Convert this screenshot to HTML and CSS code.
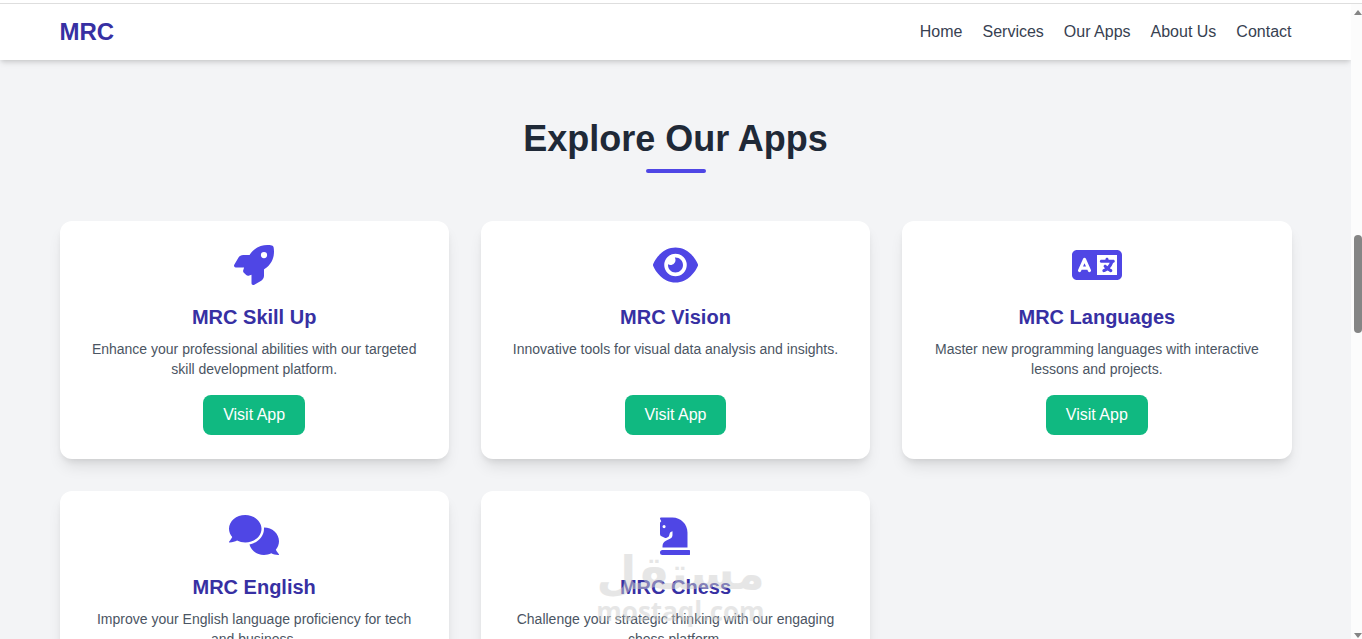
FILE: index.html
```html
<!DOCTYPE html>
<html lang="en">
<head>
<meta charset="utf-8">
<title>MRC Apps</title>
<link rel="stylesheet" href="styles.css">
</head>
<body>
<div class="page">
  <header class="site-header">
    <div class="container header-row">
      <a class="logo" href="#">MRC</a>
      <nav class="nav">
        <a href="#">Home</a>
        <a href="#">Services</a>
        <a href="#">Our Apps</a>
        <a href="#">About Us</a>
        <a href="#">Contact</a>
      </nav>
    </div>
  </header>
  <main class="container apps">
    <h2 class="section-title">Explore Our Apps</h2>
    <div class="grid">
      <article class="card">
        <svg class="icon" viewBox="0 0 512 512"><path d="M156.6 384.9L125.7 354c-8.5-8.5-11.5-20.8-7.7-32.2c3-8.9 7-20.5 11.8-33.8L24 288c-8.6 0-16.6-4.6-20.9-12.1s-4.2-16.7 .2-24.1l52.5-88.5c13-21.9 36.5-35.3 61.9-35.3l82.3 0c2.4-4 4.8-7.7 7.2-11.3C289.1-4.1 411.1-8.1 483.9 5.3c11.6 2.1 20.6 11.2 22.8 22.8c13.4 72.9 9.3 194.8-111.4 276.7c-3.5 2.4-7.3 4.8-11.3 7.2v82.3c0 25.4-13.4 49-35.3 61.9l-88.5 52.5c-7.4 4.4-16.6 4.5-24.1 .2s-12.1-12.2-12.1-20.9V380.8c-14.1 4.9-26.4 8.9-35.7 11.9c-11.2 3.6-23.4 .5-31.8-7.8zM384 168a40 40 0 1 0 0-80 40 40 0 1 0 0 80z"/></svg>
        <h3>MRC Skill Up</h3>
        <p>Enhance your professional abilities with our targeted skill development platform.</p>
        <a class="button" href="#">Visit App</a>
      </article>
      <article class="card">
        <svg class="icon" viewBox="0 0 576 512"><path d="M288 32c-80.8 0-145.5 36.8-192.6 80.6C48.6 156 17.3 208 2.5 243.7c-3.3 7.9-3.3 16.7 0 24.6C17.3 304 48.6 356 95.4 399.4C142.5 443.2 207.2 480 288 480s145.5-36.8 192.6-80.6c46.8-43.5 78.1-95.4 93-131.1c3.3-7.9 3.3-16.7 0-24.6c-14.9-35.7-46.2-87.7-93-131.1C433.5 68.8 368.8 32 288 32zM144 256a144 144 0 1 1 288 0 144 144 0 1 1 -288 0z"/><path d="M279.6 160.4C282.4 160.1 285.2 160 288 160C341 160 384 203 384 256C384 309 341 352 288 352C235 352 192 309 192 256C192 253.2 192.1 250.4 192.4 247.6C201.7 252.9 212.5 256 224 256C259.3 256 288 227.3 288 192C288 180.5 284.9 169.7 279.6 160.4z"/></svg>
        <h3>MRC Vision</h3>
        <p>Innovative tools for visual data analysis and insights.</p>
        <a class="button" href="#">Visit App</a>
      </article>
      <article class="card">
        <svg class="icon" viewBox="0 0 640 512"><path d="M0 128C0 92.7 28.7 64 64 64H256h48 16H576c35.3 0 64 28.7 64 64V384c0 35.3-28.7 64-64 64H320 304 256 64c-35.3 0-64-28.7-64-64V128zm320 0V384H576V128H320zM178.3 175.9c-3.2-7.2-10.4-11.9-18.3-11.9s-15.1 4.7-18.3 11.9l-64 144c-4.5 10.1 .1 21.9 10.2 26.4s21.9-.1 26.4-10.2l8.9-20.1h73.6l8.9 20.1c4.5 10.1 16.3 14.6 26.4 10.2s14.6-16.3 10.2-26.4l-64-144zM160 233.2L179 276H141l19-42.8zM448 164c11 0 20 9 20 20v4h44 16c11 0 20 9 20 20s-9 20-20 20h-2l-1.6 4.5c-8.9 24.4-22.4 46.6-39.6 65.4c.9 .6 1.8 1.1 2.7 1.6l18.9 11.3c9.5 5.7 12.5 18 6.9 27.4s-18 12.5-27.4 6.9l-18.9-11.3c-4.5-2.7-8.8-5.5-13.1-8.5c-10.6 7.5-21.9 14-34 19.4l-3.6 1.6c-10.1 4.5-21.9-.1-26.4-10.2s.1-21.9 10.2-26.4l3.6-1.6c6.4-2.9 12.6-6.1 18.5-9.8l-12.2-12.2c-7.8-7.8-7.8-20.5 0-28.3s20.5-7.8 28.3 0l14.6 14.6 .5 .5c12.4-13.1 22.5-28.3 29.8-45H448 376c-11 0-20-9-20-20s9-20 20-20h52v-4c0-11 9-20 20-20z"/></svg>
        <h3>MRC Languages</h3>
        <p>Master new programming languages with interactive lessons and projects.</p>
        <a class="button" href="#">Visit App</a>
      </article>
      <article class="card">
        <svg class="icon" viewBox="0 0 640 512"><path d="M416 176C416 78.88 322.9 0 208 0S0 78.88 0 176c0 39.57 15.62 75.96 41.67 105.4c-16.39 32.76-39.23 57.32-39.59 57.68c-2.1 2.205-2.67 5.475-1.441 8.354C1.9 350.3 4.602 352 7.66 352c38.35 0 70.76-11.12 95.74-24.04C134.2 343.1 169.8 352 208 352C322.9 352 416 273.1 416 176zM599.6 443.7C624.8 413.9 640 376.6 640 336C640 238.8 554 160 448 160c-.3145 0-.6191 .041-.9336 .043C447.5 165.3 448 170.6 448 176c0 98.62-79.68 181.2-186.1 202.5C282.7 455.1 357.1 512 448 512c33.69 0 65.32-8.008 92.85-21.98C565.2 502 596.1 512 632.3 512c3.059 0 5.76-1.725 7.02-4.605c1.229-2.879 .6582-6.148-1.441-8.354C637.6 498.7 615.9 475.3 599.6 443.7z"/></svg>
        <h3>MRC English</h3>
        <p>Improve your English language proficiency for tech and business.</p>
        <a class="button" href="#">Visit App</a>
      </article>
      <article class="card">
        <svg class="icon" viewBox="0 0 384 512"><path d="M19 272.47l40.63 18.06a32 32 0 0 0 24.88.47l12.78-5.12a32 32 0 0 0 18.76-20.5l9.22-30.65a24 24 0 0 1 12.55-15.65L159.94 208v50.33a48 48 0 0 1-26.53 42.94l-57.22 28.65A80 80 0 0 0 32 401.48V416h319.86V224c0-106-85.92-192-191.92-192H12A12 12 0 0 0 0 44a16.9 16.9 0 0 0 1.79 7.58L16 80l-9 9a24 24 0 0 0-7 17v137.21a32 32 0 0 0 19 29.26zM52 128a20 20 0 1 1-20 20 20 20 0 0 1 20-20zm316 320H32a32 32 0 0 0 0 64h336a32 32 0 0 0 0-64z"/></svg>
        <h3>MRC Chess</h3>
        <p>Challenge your strategic thinking with our engaging chess platform.</p>
        <a class="button" href="#">Visit App</a>
        <div class="watermark">
          <span class="watermark-ar" lang="ar" dir="rtl">مستقل</span>
          <span class="watermark-en">mostaql.com</span>
        </div>
      </article>
    </div>
  </main>
</div>
<div class="scrollbar" aria-hidden="true">
  <span class="arrow arrow-up"></span>
  <span class="thumb"></span>
  <span class="arrow arrow-down"></span>
</div>
</body>
</html>
```

FILE: styles.css
```css
* {
  box-sizing: border-box;
  margin: 0;
}

body {
  display: flex;
  height: 100vh;
  padding-top: 3px;
  overflow: hidden;
  background: #ffffff;
  color: #374151;
  font-family: "Liberation Sans", Arial, sans-serif;
  font-size: 16px;
  line-height: 24px;
}

a {
  color: inherit;
  text-decoration: none;
}

.page {
  flex: 1;
  min-width: 0;
  overflow: hidden;
  border-top: 1px solid #dedede;
  background: #f3f4f6;
}

.container {
  width: 100%;
  max-width: 1280px;
  margin: 0 auto;
  padding: 0 24px;
}

.site-header {
  position: relative;
  background: #ffffff;
  box-shadow: 0 4px 6px -1px rgba(0, 0, 0, 0.1), 0 2px 4px -1px rgba(0, 0, 0, 0.1);
}

.header-row {
  display: flex;
  align-items: center;
  justify-content: space-between;
  height: 56px;
}

.logo {
  color: #3730a3;
  font-size: 24px;
  font-weight: 700;
}

.nav {
  display: flex;
  gap: 20px;
}

.apps {
  padding-top: 48px;
}

.section-title {
  display: flex;
  flex-direction: column;
  align-items: center;
  margin-bottom: 48px;
  color: #1f2937;
  font-size: 36px;
  line-height: 61px;
}

.section-title::after {
  content: "";
  width: 60px;
  height: 4px;
  border-radius: 2px;
  background: #4f46e5;
}

.grid {
  display: grid;
  grid-template-columns: repeat(3, 1fr);
  gap: 32px;
}

.card {
  position: relative;
  display: flex;
  flex-direction: column;
  align-items: center;
  padding: 24px;
  border-radius: 12px;
  background: #ffffff;
  box-shadow: 0 10px 15px -3px rgba(0, 0, 0, 0.1), 0 4px 6px -2px rgba(0, 0, 0, 0.08);
  text-align: center;
}

.icon {
  height: 40px;
  margin-bottom: 16px;
  fill: #4f46e5;
}

.card h3 {
  margin-bottom: 6px;
  color: #3730a3;
  font-size: 20px;
  line-height: 32px;
}

.card p {
  flex: 1;
  margin-bottom: 16px;
  color: #4b5563;
  font-size: 14px;
  line-height: 20px;
}

.button {
  padding: 8px 20px;
  border-radius: 8px;
  background: #10b981;
  color: #ffffff;
}

.watermark {
  position: absolute;
  top: 56px;
  left: 0;
  right: 0;
  display: flex;
  flex-direction: column;
  align-items: center;
  padding-left: 10px;
  color: #cfcfcf;
  font-family: "DejaVu Sans", sans-serif;
  font-weight: 700;
  opacity: 0.5;
}

.watermark-ar {
  font-size: 46px;
  line-height: 52px;
}

.watermark-en {
  font-family: "Open Sans", sans-serif;
  font-size: 26px;
  line-height: 24px;
}

.scrollbar {
  display: flex;
  flex-direction: column;
  width: 11px;
  padding: 6px 0 1px 3px;
  overflow: hidden;
  border-top: 1px solid #dedede;
  background: #fcfcfc;
}

.arrow {
  width: 8px;
  height: 5px;
  background: #858585;
}

.arrow-up {
  clip-path: polygon(50% 0, 100% 100%, 0 100%);
}

.arrow-down {
  margin-top: auto;
  clip-path: polygon(0 0, 100% 0, 50% 100%);
}

.thumb {
  height: 98px;
  margin-top: 220px;
  border-radius: 4px;
  background: #858585;
}
```
